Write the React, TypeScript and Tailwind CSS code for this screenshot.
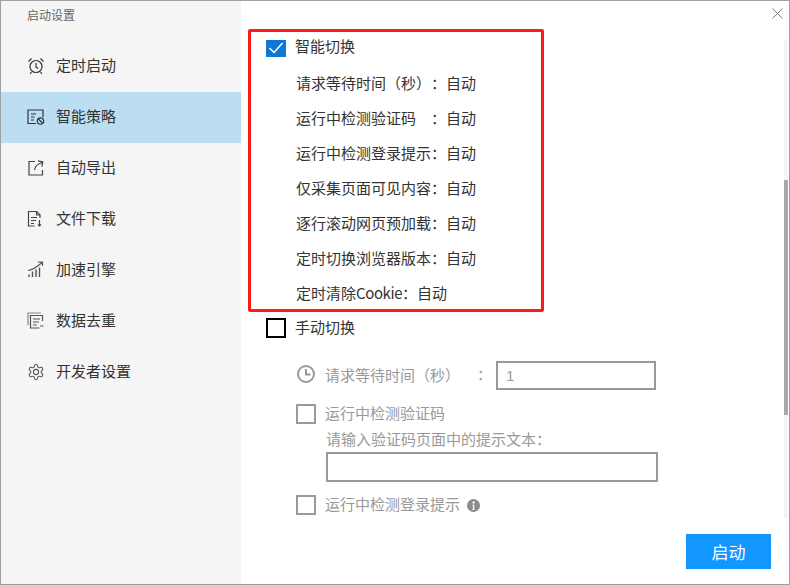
const font = { fontFamily: '"Noto Sans CJK SC", "Liberation Sans", sans-serif' };

function Alarm() {
  return (
    <svg width="18" height="18" viewBox="0 0 18 18" fill="none" stroke="#333" strokeWidth="1.2">
      <circle cx="9" cy="9.500" r="6" />
      <path d="M9 6v4l2.200 1.500M1.500 4.500 4.500 1.500M16.500 4.500l-3-3M4.500 15l-1.500 2M13.500 15l1.500 2" />
    </svg>
  );
}
function Strategy() {
  return (
    <svg width="18" height="18" viewBox="0 0 18 18" fill="none" stroke="#333" strokeWidth="1.2">
      <path d="M9 15.500H1V2h15v7" />
      <path d="M4 6h5M4 9h3.500M4 12h3" />
      <circle cx="13.500" cy="13" r="3.200" />
      <path d="m11.200 10.800 4.600 4.400" />
    </svg>
  );
}
function ExportIcon() {
  return (
    <svg width="18" height="18" viewBox="0 0 18 18" fill="none" stroke="#444" strokeWidth="1.2">
      <path d="M8 2.500H2v13.500h13.500v-5" />
      <path d="M7.500 11c.5-4 3-6 7.500-7.500M11 1.800 15.800 3 14.800 7.500" />
    </svg>
  );
}
function FileIcon() {
  return (
    <svg width="16" height="18" viewBox="0 0 16 18" fill="none" stroke="#444" strokeWidth="1.2">
      <path d="M7.500 16H1.500V1.500h8v3.500h3.500v3" />
      <path d="M9.500 1.500l3.500 3.500M4 7.500h6M4 10.500h5M4 13.500h3" />
      <path d="M12.500 10v6M11 14.500l1.500 1.500 1.500-1.500" />
    </svg>
  );
}
function Speed() {
  return (
    <svg width="17" height="17" viewBox="0 0 17 17" fill="none" stroke="#555" strokeWidth="1.2">
      <path d="M1 9.500C5 9 10 6 15 1.500M11 1h4.500v4" />
      <path d="M2 16v-2.500M5.500 16V10.500M9 16V8.500M12.500 16V6.500" strokeWidth="1.400" />
    </svg>
  );
}
function Dedup() {
  return (
    <svg width="18" height="17" viewBox="0 0 18 17" fill="none" stroke="#555" strokeWidth="1.2">
      <path d="M1 13V1h13" stroke="#888" />
      <path d="M15.500 9V3.500H3.500v12.500h9" />
      <path d="M6 7h7M6 10h6M6 13h4M13 14h3.500" />
    </svg>
  );
}
function Gear() {
  return (
    <svg width="18" height="18" viewBox="0 0 24 24" fill="none" stroke="#555" strokeWidth="1.4">
      <circle cx="12" cy="12" r="3.500" />
      <path d="M12.220 2h-.44a2 2 0 0 0-2 2v.18a2 2 0 0 1-1 1.730l-.43.25a2 2 0 0 1-2 0l-.15-.08a2 2 0 0 0-2.730.73l-.22.38a2 2 0 0 0 .73 2.730l.15.1a2 2 0 0 1 1 1.720v.51a2 2 0 0 1-1 1.740l-.15.090a2 2 0 0 0-.73 2.730l.22.380a2 2 0 0 0 2.730.730l.15-.080a2 2 0 0 1 2 0l.43.250a2 2 0 0 1 1 1.730V20a2 2 0 0 0 2 2h.44a2 2 0 0 0 2-2v-.18a2 2 0 0 1 1-1.730l.43-.25a2 2 0 0 1 2 0l.15.080a2 2 0 0 0 2.730-.730l.22-.390a2 2 0 0 0-.73-2.730l-.15-.080a2 2 0 0 1-1-1.740v-.5a2 2 0 0 1 1-1.740l.15-.090a2 2 0 0 0 .73-2.730l-.22-.380a2 2 0 0 0-2.730-.730l-.15.080a2 2 0 0 1-2 0l-.43-.250a2 2 0 0 1-1-1.730V4a2 2 0 0 0-2-2z" />
    </svg>
  );
}

const nav = [
  { label: "定时启动", icon: <Alarm /> },
  { label: "智能策略", icon: <Strategy />, active: true },
  { label: "自动导出", icon: <ExportIcon /> },
  { label: "文件下载", icon: <FileIcon /> },
  { label: "加速引擎", icon: <Speed /> },
  { label: "数据去重", icon: <Dedup /> },
  { label: "开发者设置", icon: <Gear /> },
];

const rows = [
  "请求等待时间（秒）",
  "运行中检测验证码",
  "运行中检测登录提示",
  "仅采集页面可见内容",
  "逐行滚动网页预加载",
  "定时切换浏览器版本",
];

export default function App() {
  return (
    <div className="w-[790px] h-[585px] border border-[#a0a0a0] bg-white flex text-[15px] text-[#333] overflow-hidden" style={font}>
      <aside className="w-[240px] shrink-0 bg-[#f5f5f5]">
        <div className="h-[40px] pl-[26px] pt-[5px] text-[12px] leading-[18px] text-[#666]">启动设置</div>
        {nav.map((n) => (
          <div key={n.label} className={`h-[51px] flex items-center ${n.active ? "bg-[#bcdef2]" : ""}`}>
            <span className="w-[55px] pl-[26px] pb-[2px] shrink-0 flex items-center">{n.icon}</span>
            <span className="leading-5 pb-[3px]">{n.label}</span>
          </div>
        ))}
      </aside>
      <main className="relative flex-1 flex flex-col pt-[28px]">
        <svg className="absolute top-[7px] right-[6px]" width="11" height="11" viewBox="0 0 11 11" stroke="#777" strokeWidth="1">
          <path d="M.5.5l10 10M10.500.5l-10 10" />
        </svg>
        <div className="absolute top-[39px] bottom-[66px] right-[1px] w-[4px] bg-[#f5f5f5]">
          <div className="absolute top-[140px] h-[235px] w-full bg-[#a8a8a8]" />
        </div>
        <section className="ml-[7px] w-[296px] h-[283px] border-[3px] border-[#fb1c17] rounded-[2px] flex flex-col">
          <div className="h-[22px] mt-[5px] pl-[15px] flex items-center">
            <span className="w-5 h-[17px] bg-[#0f78d4] flex items-center justify-center">
              <svg width="16" height="12" viewBox="0 0 16 12" fill="none" stroke="white" strokeWidth="1.500">
                <path d="M1.500 6 6 10.500 14.500 1" />
              </svg>
            </span>
            <span className="ml-[9px] leading-5 pb-[4px]">智能切换</span>
          </div>
          <div className="pl-[45px] pt-[8px]">
            {rows.map((r) => (
              <div key={r} className="h-[35px] flex items-center leading-5 pb-[4px]">
                <span className="w-[135px]">{r}</span>
                <span className="w-[15px]">：</span>
                <span>自动</span>
              </div>
            ))}
            <div className="h-[35px] flex items-center leading-5 pb-[4px]">
              <span>定时清除<span className="tracking-[-0.4px]">Cookie</span></span>
              <span className="w-[15px]">：</span>
              <span>自动</span>
            </div>
          </div>
        </section>
        <div className="mt-[6px] ml-[25px] h-5 flex items-center">
          <span className="w-5 h-5 border-2 border-black" />
          <span className="ml-[9px] leading-5 pb-[2px]">手动切换</span>
        </div>
        <div className="mt-[23px] ml-[56px] h-[29px] flex items-center text-[#999]">
          <svg className="mb-[3px]" width="18" height="18" viewBox="0 0 18 18" fill="none" stroke="#999" strokeWidth="2">
            <circle cx="9" cy="9" r="8" />
            <path d="M9 4v5.500h4.500" />
          </svg>
          <span className="ml-[10px] w-[152px] leading-5 pb-[2px]">请求等待时间（秒）</span>
          <span className="w-[19px] pb-[2px]">：</span>
          <div className="w-[160px] h-[29px] border-2 border-[#999] pl-[8px] flex items-center leading-5" style={{ fontFamily: '"Liberation Sans", sans-serif' }}>1</div>
        </div>
        <div className="mt-[14px] ml-[55px] h-5 flex items-center text-[#999]">
          <span className="w-5 h-5 border-2 border-[#999]" />
          <span className="ml-[9px] leading-5 pb-[2px]">运行中检测验证码</span>
        </div>
        <div className="mt-[5px] ml-[85px] h-[21px] leading-5 text-[#999]">请输入验证码页面中的提示文本：</div>
        <div className="mt-[2px] ml-[85px] w-[332px] h-[30px] border-2 border-[#999]" />
        <div className="mt-[13px] ml-[55px] h-5 flex items-center text-[#999]">
          <span className="w-5 h-5 border-2 border-[#999]" />
          <span className="ml-[9px] leading-5 pb-[2px]">运行中检测登录提示</span>
          <svg className="ml-[7px]" width="13" height="13" viewBox="0 0 13 13">
            <circle cx="6.500" cy="6.500" r="6.500" fill="#8c8c8c" />
            <rect x="5.500" y="2.500" width="2.200" height="2" fill="white" />
            <path d="M5 5.800h2.500L7 10h1v.8H5V10h.8l.4-3.400H5z" fill="white" />
          </svg>
        </div>
        <div className="mt-[19px] mr-[18px] flex justify-end">
          <button className="w-[85px] h-[35px] bg-[#1296ff] text-white text-[17px] leading-[33px]">启动</button>
        </div>
      </main>
    </div>
  );
}
